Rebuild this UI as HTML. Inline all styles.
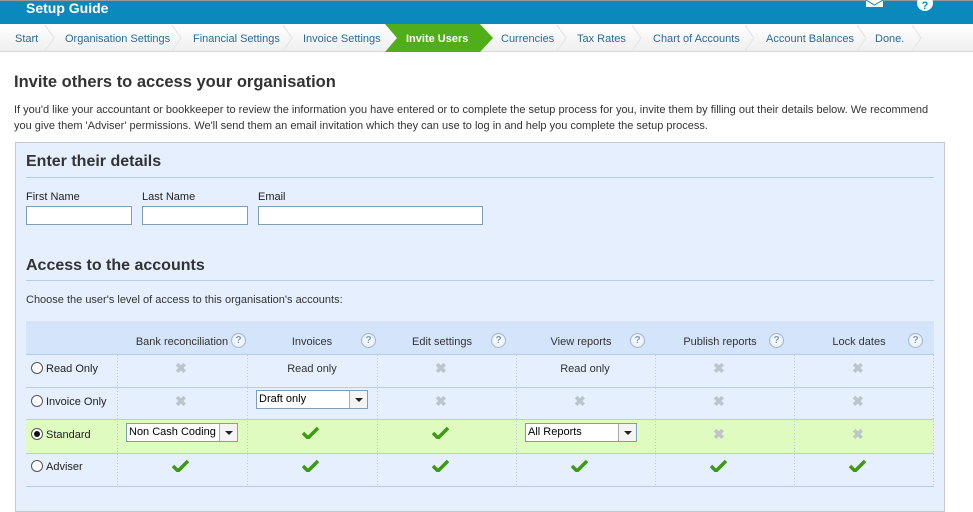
<!DOCTYPE html>
<html><head><meta charset="utf-8"><style>
*{margin:0;padding:0;box-sizing:border-box}
body{width:973px;height:501px;overflow:hidden;background:#fff;font-family:"Liberation Sans",sans-serif;position:relative;color:#222}
.a{position:absolute;white-space:nowrap}
#hdr{position:absolute;left:0;top:0;width:973px;height:24px;background:#0a89bc;border-top:1px solid #999}
#bc{position:absolute;left:0;top:24px;width:973px;height:28px;background:linear-gradient(#fff,#efefef);border-bottom:1px solid #d8d8d8}
.bi{position:absolute;top:8px;font-size:11px;color:#2d6a99}
.panel{position:absolute;left:15px;top:142px;width:930px;height:370px;background:#e5effd;border:1px solid #c4c8ce}
h2{position:absolute;font-size:16px;font-weight:bold;color:#333}
.rule{position:absolute;left:26px;width:908px;height:1px;background:#b7cde6}
.lbl{position:absolute;font-size:11px;color:#222}
.inp{position:absolute;height:19px;background:#fff;border:1px solid #7f9db9}
.cell{position:absolute;font-size:11px;color:#333;text-align:center}
.q{position:absolute;width:15px;height:15px;border-radius:50%;background:radial-gradient(#fff,#dfe8f3);border:1px solid #9fb6cf;font-size:10px;font-weight:bold;color:#7a9bbf;text-align:center;line-height:13px}
.x{position:absolute;font-size:14px;color:#bcc4cc;font-weight:bold}
.sel{position:absolute;height:19px;background:#fff;border:1px solid #7f9db9;font-size:11px;padding:2px 2px;color:#000}
.sel b{position:absolute;right:0;top:0;width:18px;height:17px;border-left:1px solid #aaa;background:#f4f4f4}
.sel b:after{content:"";position:absolute;left:5px;top:7px;border:4px solid transparent;border-top:4px solid #222;border-bottom:0}
.rad{position:absolute;width:12px;height:12px;border-radius:50%;border:1px solid #555;background:#fff}
</style></head><body>
<div id="hdr"></div>
<div class="a" style="left:26px;top:0px;color:#fff;font-weight:bold;font-size:14px">Setup Guide</div>
<svg class="a" style="left:866px;top:0" width="18" height="8"><rect x="0" y="0" width="17" height="7" fill="#fff"/><path d="M0 0 L8.5 5 L17 0" stroke="#0a89bc" fill="none"/></svg>
<svg class="a" style="left:917px;top:0" width="16" height="12"><circle cx="8" cy="3" r="8" fill="#fff"/><text x="8" y="9" font-size="11" font-weight="bold" text-anchor="middle" fill="#0a89bc" font-family="Liberation Sans">?</text></svg>
<div id="bc"></div>
<svg class="a" style="left:0;top:24px" width="973" height="28">
<g fill="none" stroke="#e6e6e6" stroke-width="1.2">
<path d="M45 1 L54 14 L45 27"/><path d="M172 1 L181 14 L172 27"/><path d="M283 1 L292 14 L283 27"/><path d="M557 1 L566 14 L557 27"/><path d="M632 1 L641 14 L632 27"/><path d="M745 1 L754 14 L745 27"/><path d="M857 1 L866 14 L857 27"/><path d="M912 1 L921 14 L912 27"/></g>
<path d="M385 0 L480 0 L493 14 L480 28 L385 28 L397 14 Z" fill="#4fae1a"/>
</svg>
<div class="bi" style="left:15px;top:33px">Start</div>
<div class="bi" style="left:65px;top:33px">Organisation Settings</div>
<div class="bi" style="left:193px;top:33px">Financial Settings</div>
<div class="bi" style="left:303px;top:33px">Invoice Settings</div>
<div class="bi" style="left:406px;top:33px;color:#fff;font-weight:bold">Invite Users</div>
<div class="bi" style="left:501px;top:33px">Currencies</div>
<div class="bi" style="left:577px;top:33px">Tax Rates</div>
<div class="bi" style="left:653px;top:33px">Chart of Accounts</div>
<div class="bi" style="left:766px;top:33px">Account Balances</div>
<div class="bi" style="left:875px;top:33px">Done.</div>

<div class="a" style="left:14px;top:73px;font-size:16.5px;font-weight:bold;color:#333">Invite others to access your organisation</div>
<div class="a" style="left:14px;top:102px;font-size:11px;line-height:16px;color:#333;white-space:normal;width:920px">If you'd like your accountant or bookkeeper to review the information you have entered or to complete the setup process for you, invite them by filling out their details below. We recommend you give them 'Adviser' permissions. We'll send them an email invitation which they can use to log in and help you complete the setup process.</div>

<div class="panel"></div>
<h2 style="left:26px;top:153px">Enter their details</h2>
<div class="rule" style="top:177px"></div>
<div class="lbl" style="left:26px;top:191px">First Name</div>
<div class="lbl" style="left:142px;top:191px">Last Name</div>
<div class="lbl" style="left:258px;top:191px">Email</div>
<div class="inp" style="left:26px;top:206px;width:106px"></div>
<div class="inp" style="left:142px;top:206px;width:106px"></div>
<div class="inp" style="left:258px;top:206px;width:225px"></div>
<h2 style="left:26px;top:257px">Access to the accounts</h2>
<div class="rule" style="top:280px"></div>
<div class="lbl" style="left:26px;top:294px;color:#333">Choose the user's level of access to this organisation's accounts:</div>

<svg class="a" style="left:26px;top:321px" width="909" height="166">
<rect x="0" y="0" width="908" height="33" fill="#d4e4fb"/>
<rect x="0" y="33" width="908" height="132" fill="#e5effd"/>
<rect x="0" y="98" width="908" height="34" fill="#e0fbc0"/>
<g stroke="#b7cde6"><line x1="0" y1="33.5" x2="908" y2="33.5"/><line x1="0" y1="66.5" x2="908" y2="66.5"/><line x1="0" y1="98.5" x2="908" y2="98.5"/><line x1="0" y1="132.5" x2="908" y2="132.5"/><line x1="0" y1="165.5" x2="908" y2="165.5"/></g>
<g stroke="#b7cde6" stroke-dasharray="1,2"><line x1="91.5" y1="34" x2="91.5" y2="165"/><line x1="221.5" y1="34" x2="221.5" y2="165"/><line x1="351.5" y1="34" x2="351.5" y2="165"/><line x1="490.5" y1="34" x2="490.5" y2="165"/><line x1="629.5" y1="34" x2="629.5" y2="165"/><line x1="768.5" y1="34" x2="768.5" y2="165"/><line x1="907.5" y1="34" x2="907.5" y2="165"/></g>
</svg>

<div class="cell" style="left:117px;top:336px;width:130px">Bank reconciliation</div><div class="q" style="left:231px;top:333px">?</div>
<div class="cell" style="left:247px;top:336px;width:130px">Invoices</div><div class="q" style="left:361px;top:333px">?</div>
<div class="cell" style="left:377px;top:336px;width:130px">Edit settings</div><div class="q" style="left:491px;top:333px">?</div>
<div class="cell" style="left:516px;top:336px;width:130px">View reports</div><div class="q" style="left:630px;top:333px">?</div>
<div class="cell" style="left:655px;top:336px;width:130px">Publish reports</div><div class="q" style="left:769px;top:333px">?</div>
<div class="cell" style="left:794px;top:336px;width:130px">Lock dates</div><div class="q" style="left:908px;top:333px">?</div>

<div class="rad" style="left:31px;top:362px"></div><div class="lbl" style="left:46px;top:363px">Read Only</div>
<div class="rad" style="left:31px;top:395px"></div><div class="lbl" style="left:46px;top:396px">Invoice Only</div>
<div class="rad" style="left:31px;top:428px"></div><div class="a" style="left:34px;top:431px;width:6px;height:6px;border-radius:50%;background:#111"></div><div class="lbl" style="left:46px;top:429px">Standard</div>
<div class="rad" style="left:31px;top:460px"></div><div class="lbl" style="left:46px;top:461px">Adviser</div>

<div class="x" style="left:175px;top:360px">✖</div>
<div class="cell" style="left:247px;top:363px;width:130px">Read only</div>
<div class="x" style="left:435px;top:360px">✖</div>
<div class="cell" style="left:520px;top:363px;width:130px">Read only</div>
<div class="x" style="left:713px;top:360px">✖</div>
<div class="x" style="left:852px;top:360px">✖</div>

<div class="x" style="left:175px;top:393px">✖</div>
<div class="sel" style="left:256px;top:390px;width:112px">Draft only<b></b></div>
<div class="x" style="left:435px;top:393px">✖</div>
<div class="x" style="left:574px;top:393px">✖</div>
<div class="x" style="left:713px;top:393px">✖</div>
<div class="x" style="left:852px;top:393px">✖</div>

<div class="sel" style="left:126px;top:423px;width:112px">Non Cash Coding<b></b></div>
<svg class="a" style="left:302px;top:426px" width="17" height="13"><path d="M1 7 L6 12 L16 2" stroke="#3d9a12" stroke-width="3.5" fill="none"/></svg>
<svg class="a" style="left:432px;top:426px" width="17" height="13"><path d="M1 7 L6 12 L16 2" stroke="#3d9a12" stroke-width="3.5" fill="none"/></svg>
<div class="sel" style="left:525px;top:423px;width:112px">All Reports<b></b></div>
<div class="x" style="left:713px;top:426px">✖</div>
<div class="x" style="left:852px;top:426px">✖</div>

<svg class="a" style="left:172px;top:459px" width="17" height="13"><path d="M1 7 L6 12 L16 2" stroke="#3d9a12" stroke-width="3.5" fill="none"/></svg>
<svg class="a" style="left:302px;top:459px" width="17" height="13"><path d="M1 7 L6 12 L16 2" stroke="#3d9a12" stroke-width="3.5" fill="none"/></svg>
<svg class="a" style="left:432px;top:459px" width="17" height="13"><path d="M1 7 L6 12 L16 2" stroke="#3d9a12" stroke-width="3.5" fill="none"/></svg>
<svg class="a" style="left:571px;top:459px" width="17" height="13"><path d="M1 7 L6 12 L16 2" stroke="#3d9a12" stroke-width="3.5" fill="none"/></svg>
<svg class="a" style="left:710px;top:459px" width="17" height="13"><path d="M1 7 L6 12 L16 2" stroke="#3d9a12" stroke-width="3.5" fill="none"/></svg>
<svg class="a" style="left:849px;top:459px" width="17" height="13"><path d="M1 7 L6 12 L16 2" stroke="#3d9a12" stroke-width="3.5" fill="none"/></svg>
</body></html>
